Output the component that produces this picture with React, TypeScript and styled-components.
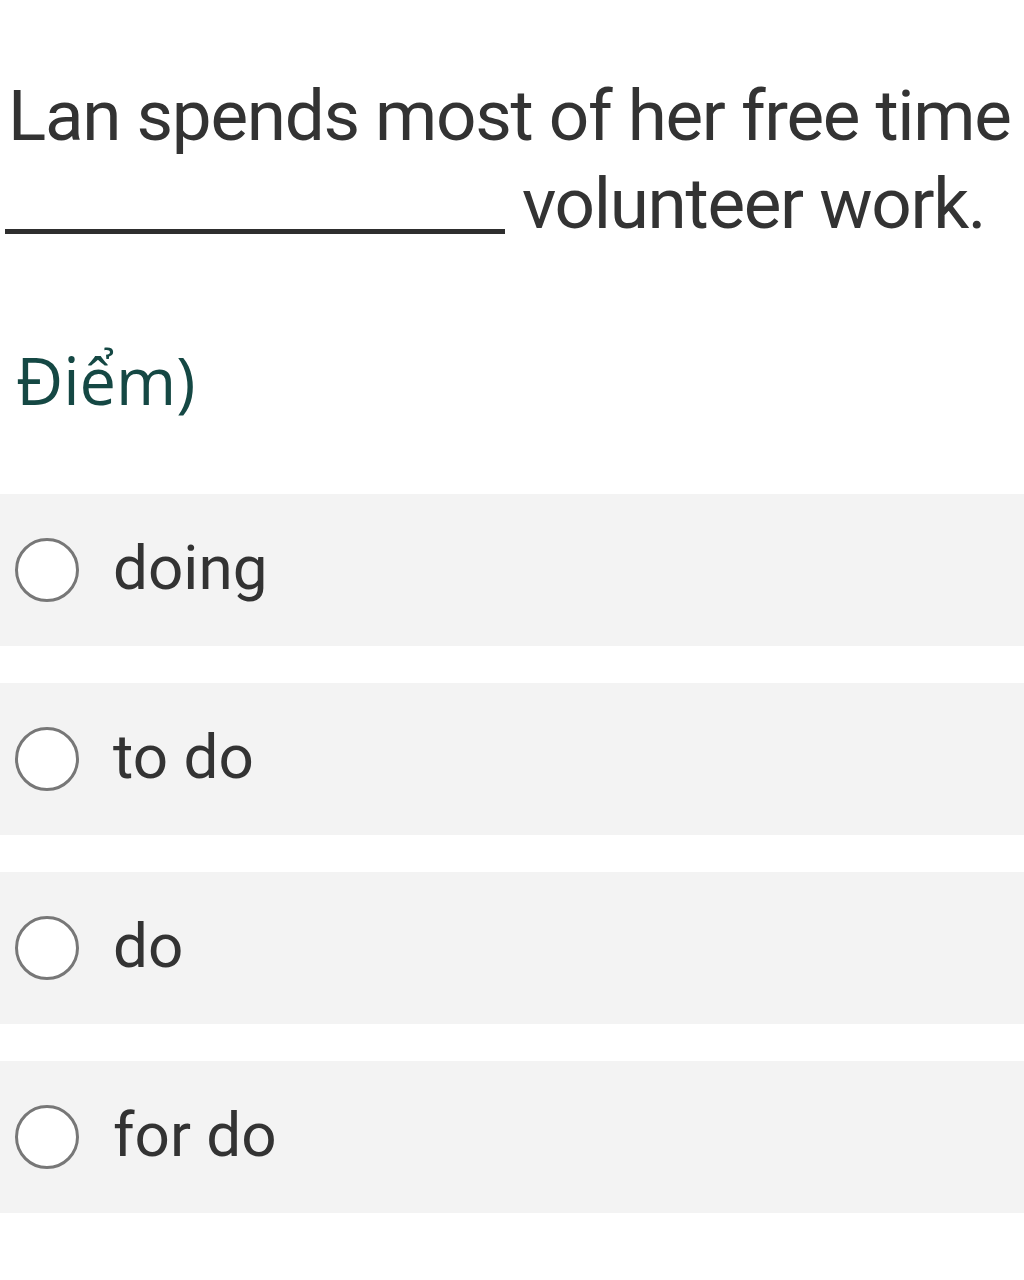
import styled, { createGlobalStyle } from "styled-components";

const GlobalStyle = createGlobalStyle`
	html, body {
		margin: 0;
		padding: 0;
		background: #ffffff;
	}
	body {
		font-family: Roboto, "Noto Sans", "Liberation Sans", sans-serif;
		color: #333333;
	}
`;

const Page = styled.div`
	width: 1024px;
	height: 1280px;
	overflow: hidden;
	background: #ffffff;
`;

const Question = styled.p`
	margin: 0;
	padding: 72px 0 0 8px;
	font-size: 71px;
	line-height: 88px;
	color: #333333;
	letter-spacing: -1.3px;
	white-space: nowrap;
`;

const Blank = styled.span`
	display: inline-block;
	width: 500px;
	height: 5px;
	background: #2e2e2e;
	margin: 0 17px 0 -3px;
	vertical-align: -6px;
`;

const Points = styled.div`
	margin-top: 92px;
	padding-left: 16px;
	font-family: "Open Sans", "Noto Sans", sans-serif;
	font-size: 65px;
	line-height: 80px;
	color: #154844;
`;

const Options = styled.div`
	display: flex;
	flex-direction: column;
	gap: 37px;
	margin-top: 74px;
`;

const Option = styled.label`
	display: flex;
	align-items: center;
	gap: 34px;
	height: 152px;
	padding-left: 15px;
	background: #f3f3f3;
	box-sizing: border-box;
`;

const Radio = styled.span`
	width: 58px;
	height: 58px;
	border-radius: 50%;
	border: 3px solid #777777;
	background: #ffffff;
	flex-shrink: 0;
`;

const OptionText = styled.span`
	font-size: 62px;
	color: #333333;
	line-height: 1;
	padding-bottom: 4px;
`;

const answers = ["doing", "to do", "do", "for do"];

export default function App() {
	return (
		<Page>
			<GlobalStyle />
			<Question>
				Lan spends most of her free time
				<br />
				<Blank />
				volunteer work.
			</Question>
			<Points>Điểm)</Points>
			<Options>
				{answers.map((a) => (
					<Option key={a}>
						<Radio />
						<OptionText>{a}</OptionText>
					</Option>
				))}
			</Options>
		</Page>
	);
}
